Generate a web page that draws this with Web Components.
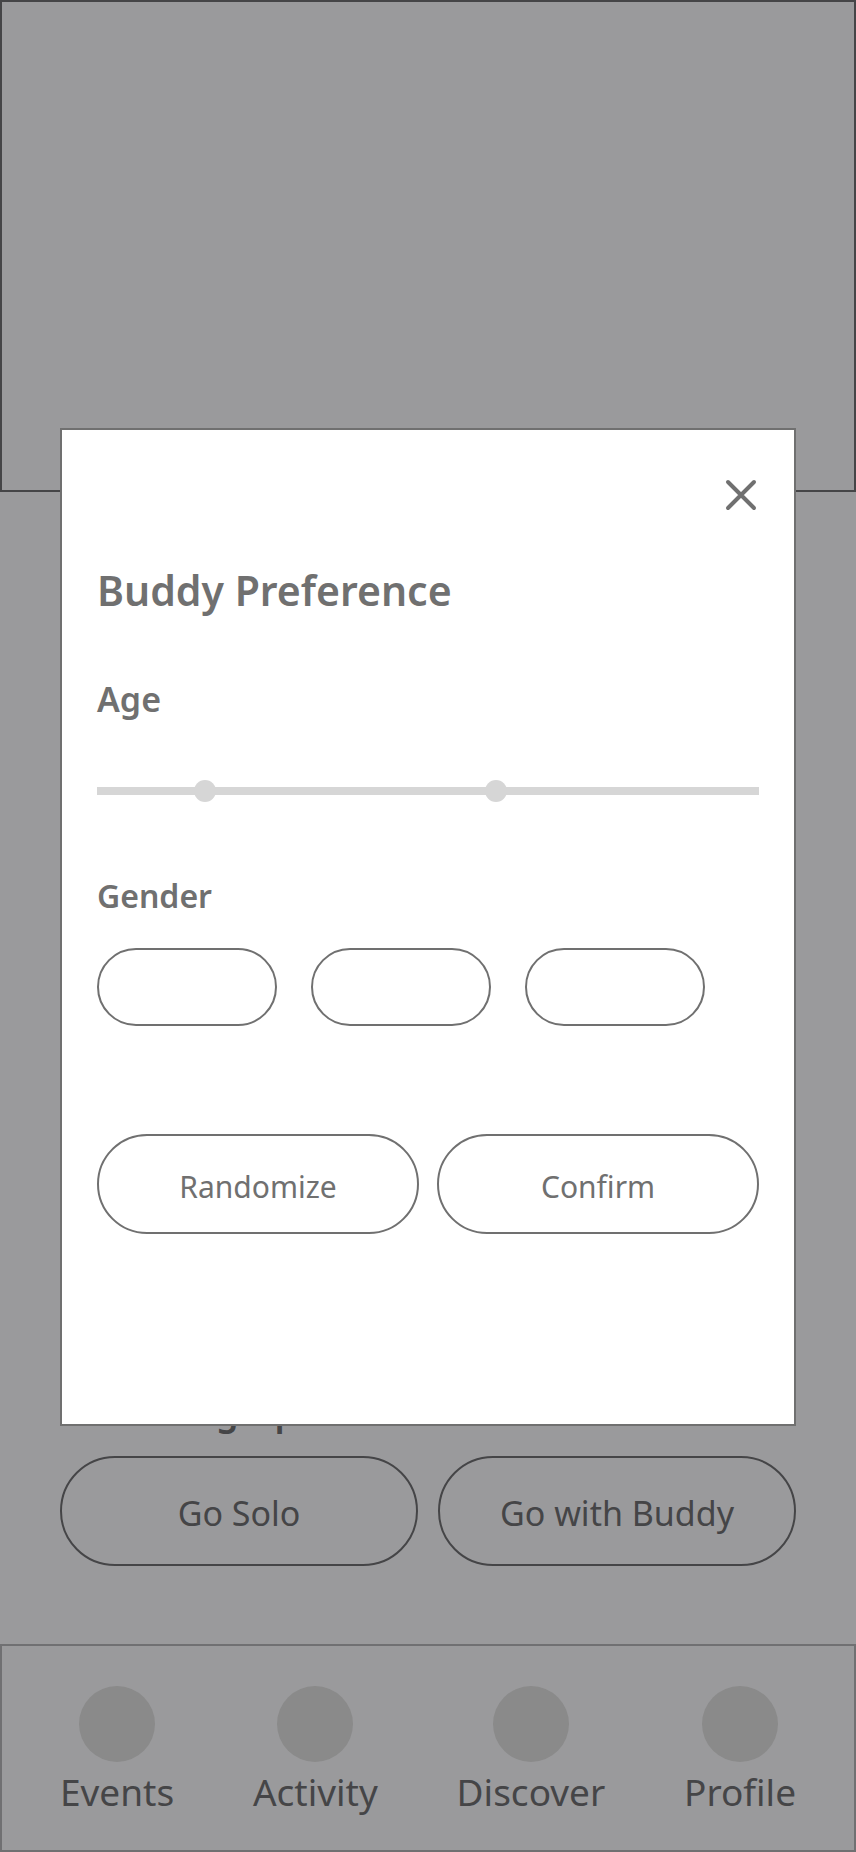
<!DOCTYPE html>
<html lang="en">
<head>
<meta charset="utf-8">
<meta name="viewport" content="width=device-width, initial-scale=1">
<title>Buddy Preference</title>
<style>
  body { margin: 0; background: #9a9a9c; color: #454547; font-family: "Noto Sans", "Open Sans", sans-serif; }
</style>
</head>
<body>
<event-page>
  <buddy-heading slot="stats">Demographics</buddy-heading>
  <pill-button slot="actions" size="large">Go Solo</pill-button>
  <pill-button slot="actions" size="large">Go with Buddy</pill-button>
  <nav-bar slot="nav">
    <nav-item>Events</nav-item>
    <nav-item>Activity</nav-item>
    <nav-item>Discover</nav-item>
    <nav-item>Profile</nav-item>
  </nav-bar>
</event-page>
<modal-dialog>
  <span slot="title">Buddy Preference</span>
  <form-group label="Age"><age-range min="18" max="84" from="28" to="58"></age-range></form-group>
  <form-group label="Gender" size="small"><gender-choice></gender-choice></form-group>
  <pill-button slot="actions">Randomize</pill-button>
  <pill-button slot="actions">Confirm</pill-button>
</modal-dialog>

<script>
const define = (name, html, setup) => {
  const template = document.createElement('template');
  template.innerHTML = html;
  customElements.define(name, class extends HTMLElement {
    constructor() {
      super();
      this.attachShadow({ mode: 'open' }).append(template.content.cloneNode(true));
    }
    connectedCallback() { if (setup) setup(this, this.shadowRoot); }
  });
};

define('event-page', `
  <style>
    :host { display: flex; flex-direction: column; min-height: 100vh; }
    .hero { box-sizing: border-box; height: 492px; border: 2px solid #454547; }
    main { flex: 1; display: flex; flex-direction: column; justify-content: flex-end; gap: 20px; padding: 0 60px 78px; }
    .row { display: grid; grid-template-columns: 1fr 1fr; gap: 20px; }
  </style>
  <header class="hero"></header>
  <main>
    <div class="row"><slot name="stats"></slot></div>
    <div class="row"><slot name="actions"></slot></div>
  </main>
  <slot name="nav"></slot>`);

define('buddy-heading', `
  <style>
    :host { display: block; }
    h2 { margin: 0; font-size: 36px; line-height: 48px; font-weight: 600; text-align: center; }
  </style>
  <h2><slot></slot></h2>`);

define('pill-button', `
  <style>
    :host { display: block; }
    button { box-sizing: border-box; width: 100%; height: 100px; padding: 6px 0 0; border: 2px solid currentColor;
      border-radius: 50px; background: none; color: inherit; font: 400 30px/40px "Noto Sans", "Open Sans", sans-serif; }
    :host([size="large"]) button { height: 110px; padding-top: 4px; border-radius: 55px; font-size: 34px; }
  </style>
  <button type="button"><slot></slot></button>`);

define('nav-bar', `
  <style>
    :host { display: block; }
    nav { box-sizing: border-box; display: flex; justify-content: space-between; height: 208px; padding: 40px 58px 0; border: 2px solid #707072; }
  </style>
  <nav><slot></slot></nav>`);

define('nav-item', `
  <style>
    :host { display: block; }
    a { display: flex; flex-direction: column; align-items: center; gap: 4px; color: inherit; text-decoration: none;
      font-size: 37px; line-height: 52px; }
    i { width: 76px; height: 76px; border-radius: 50%; background: #8a8a8a; }
  </style>
  <a href="#"><i></i><slot></slot></a>`);

define('modal-dialog', `
  <style>
    :host { position: fixed; inset: 0; display: grid; align-items: center; padding: 2px 60px 0; color: #707070; }
    section { box-sizing: border-box; min-height: 998px; padding: 42px 35px; border: 2px solid #707070; background: #fff; }
    header { display: flex; justify-content: flex-end; }
    .close { width: 36px; height: 44px; padding: 0; border: 0; background: none; color: inherit; }
    svg { display: block; width: 36px; height: 44px; }
    h1 { margin: 44px 0 0; font-size: 41px; line-height: 60px; font-weight: 600; }
    .actions { display: grid; grid-template-columns: 1fr 1fr; gap: 18px; margin-top: 108px; }
  </style>
  <section role="dialog" aria-modal="true" aria-labelledby="title">
    <header>
      <button class="close" type="button" aria-label="Close">
        <svg viewBox="0 0 36 44" fill="none" stroke="currentColor" stroke-width="4" stroke-linecap="round"><path d="M5 10 31 36M31 10 5 36"/></svg>
      </button>
    </header>
    <h1 id="title"><slot name="title"></slot></h1>
    <slot></slot>
    <div class="actions"><slot name="actions"></slot></div>
  </section>`);

define('form-group', `
  <style>
    :host { display: block; margin-top: 55px; }
    fieldset { min-width: 0; margin: 0; padding: 0; border: 0; }
    legend { padding: 0; font-size: 34px; line-height: 48px; font-weight: 600; }
    :host([size="small"]) { margin-top: 70px; }
    :host([size="small"]) legend { font-size: 32px; }
  </style>
  <fieldset><legend></legend><slot></slot></fieldset>`,
  (host, root) => { root.querySelector('legend').textContent = host.getAttribute('label'); });

define('age-range', `
  <style>
    :host { display: grid; align-items: center; margin-top: 57px; height: 22px; }
    .track, input { grid-area: 1 / 1; }
    .track { height: 8px; background: #d6d6d6; }
    input { appearance: none; width: 100%; height: 22px; margin: 0; background: none; pointer-events: none; }
    input::-webkit-slider-thumb { appearance: none; width: 22px; height: 22px; border-radius: 50%; background: #d6d6d6; pointer-events: auto; }
  </style>
  <div class="track"></div>
  <input type="range" aria-label="Minimum age">
  <input type="range" aria-label="Maximum age">`,
  (host, root) => {
    ['from', 'to'].forEach((key, i) => {
      const input = root.querySelectorAll('input')[i];
      input.min = host.getAttribute('min');
      input.max = host.getAttribute('max');
      input.value = host.getAttribute(key);
    });
  });

define('gender-choice', `
  <style>
    :host { display: flex; gap: 34px; margin-top: 28px; }
    input { appearance: none; box-sizing: border-box; flex: 0 1 180px; height: 78px; margin: 0; border: 2px solid #707070; border-radius: 39px; }
    input:checked { background: #d6d6d6; }
  </style>
  <input type="radio" name="gender" aria-label="Female">
  <input type="radio" name="gender" aria-label="Male">
  <input type="radio" name="gender" aria-label="Other">`);
</script>
</body>
</html>
